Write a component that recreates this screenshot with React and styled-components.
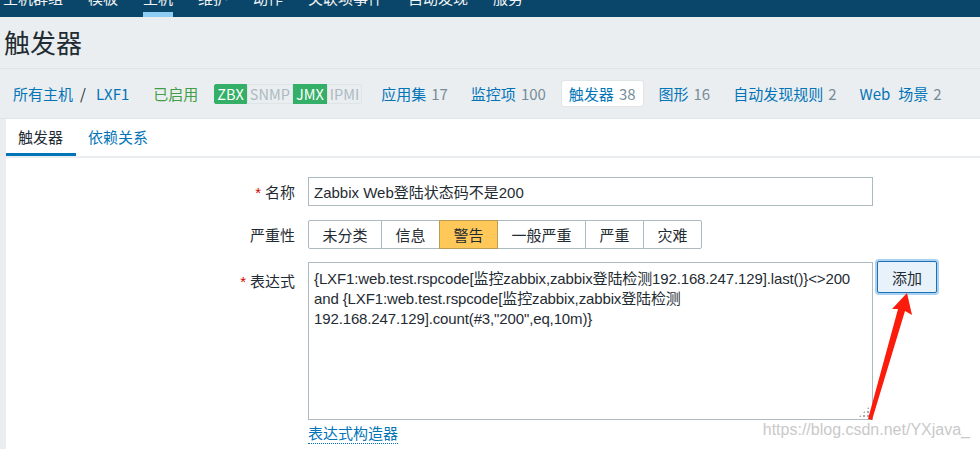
import React from "react";
import styled, { createGlobalStyle } from "styled-components";

const GlobalStyle = createGlobalStyle`
  html, body {
    margin: 0;
    padding: 0;
    background: #ebeef0;
    font-family: "Liberation Sans", "Noto Sans CJK SC", sans-serif;
    font-size: 15px;
    color: #1f2c33;
  }
  * { box-sizing: border-box; }
`;

const topMenu = ["主机群组", "模板", "主机", "维护", "动作", "关联项事件", "自动发现", "服务"];

const hostNav = [
  { label: "应用集", count: 17 },
  { label: "监控项", count: 100 },
  { label: "触发器", count: 38, active: true },
  { label: "图形", count: 16 },
  { label: "自动发现规则", count: 2 },
  { label: "场景", prefix: "Web", count: 2 },
];

const severities = ["未分类", "信息", "警告", "一般严重", "严重", "灾难"];

const expression =
  '{LXF1:web.test.rspcode[监控zabbix,zabbix登陆检测192.168.247.129].last()}<>200 and {LXF1:web.test.rspcode[监控zabbix,zabbix登陆检测192.168.247.129].count(#3,"200",eq,10m)}';

export default function App() {
  return (
    <Page>
      <GlobalStyle />
      <TopNav>
        <TopMenu>
          {topMenu.map((m) => (
            <TopItem key={m} $active={m === "主机"}>
              {m}
            </TopItem>
          ))}
        </TopMenu>
      </TopNav>

      <Header>
        <h1>触发器</h1>
      </Header>

      <HostBar>
        <Crumbs>
          <Link>所有主机</Link>
          <Sep>/</Sep>
          <Link>LXF1</Link>
        </Crumbs>
        <Status>已启用</Status>
        <Badges>
          <Badge $on>ZBX</Badge>
          <Badge>SNMP</Badge>
          <Badge $on>JMX</Badge>
          <Badge>IPMI</Badge>
        </Badges>
        {hostNav.map((n) => (
          <HostLink key={n.label} $active={n.active}>
            <Link>
              {n.prefix && <Prefix>{n.prefix}</Prefix>}
              {n.label}
            </Link>
            <Count>{n.count}</Count>
          </HostLink>
        ))}
      </HostBar>

      <Panel>
        <Tabs>
          <Tab $active>触发器</Tab>
          <Tab>依赖关系</Tab>
        </Tabs>

        <Form>
          <Row>
            <Label $required>名称</Label>
            <TextInput readOnly value="Zabbix Web登陆状态码不是200" />
          </Row>
          <Row>
            <Label>严重性</Label>
            <Segmented>
              {severities.map((s) => (
                <SevButton key={s} $selected={s === "警告"}>
                  {s}
                </SevButton>
              ))}
            </Segmented>
          </Row>
          <Row $top>
            <Label $required $top>表达式</Label>
            <Field>
              <ExprLine>
                <AreaWrap>
                  <ExprArea readOnly value={expression} />
                </AreaWrap>
                <AddButton>添加</AddButton>
              </ExprLine>
              <Builder>表达式构造器</Builder>
            </Field>
          </Row>
        </Form>
      </Panel>

      <Arrow viewBox="0 0 980 449">
        <polygon points="907,293 912,315 905,311 872,420 868,419 898,309 892,309" fill="#fb1c0c" />
      </Arrow>
      <Watermark>https://blog.csdn.net/YXjava_</Watermark>
    </Page>
  );
}

const Page = styled.div`
  position: relative;
  width: 980px;
  height: 449px;
  overflow: hidden;
`;

const TopNav = styled.nav`
  height: 17px;
  background: #0a466a;
  overflow: hidden;
`;

const TopMenu = styled.ul`
  display: flex;
  gap: 25px;
  margin: -10px 0 0;
  padding: 0 0 0 3px;
  list-style: none;
`;

const TopItem = styled.li`
  color: #f2f4f5;
  font-size: 15px;
  line-height: 18px;
  height: 27px;
  border-bottom: 5px solid ${(p) => (p.$active ? "#8fcdf5" : "transparent")};
`;

const Header = styled.header`
  height: 52px;
  display: flex;
  align-items: center;
  padding: 2px 4px 0;
  border-bottom: 1px solid #dfe4e7;

  h1 {
    margin: 0;
    font-size: 26px;
    font-weight: normal;
    color: #1f2c33;
    line-height: 30px;
  }
`;

const HostBar = styled.div`
  height: 50px;
  display: flex;
  align-items: center;
  gap: 9px;
  padding: 0 6px;
  border-bottom: 1px solid #dfe4e7;
  font-family: "Noto Sans CJK SC", sans-serif;
  line-height: 20px;
`;

const Link = styled.span`
  color: #0275b8;
`;

const Prefix = styled.span`
  margin-right: 8px;
`;

const Crumbs = styled.div`
  display: flex;
  align-items: center;
  padding: 0 7px;
`;

const Sep = styled.span`
  color: #1f2c33;
  margin: 0 10px 0 7px;
`;

const Status = styled.span`
  color: #429e47;
  padding: 0 7px;
  margin-left: 1px;
`;

const Badges = styled.div`
  display: flex;
  margin-right: 3px;
`;

const Badge = styled.span`
  height: 20px;
  line-height: 18px;
  font-size: 14.5px;
  padding: 0 2px;
  border: 1px solid ${(p) => (p.$on ? "#34af67" : "#dfe4e7")};
  background: ${(p) => (p.$on ? "#34af67" : "#ebeef0")};
  color: ${(p) => (p.$on ? "#ffffff" : "#acbbc2")};
  &:first-child { border-radius: 2px 0 0 2px; }
  &:last-child { border-radius: 0 2px 2px 0; }
`;

const HostLink = styled.span`
  display: flex;
  align-items: center;
  gap: 5px;
  height: 25px;
  padding: 0 7px;
  border-radius: 2px;
  background: ${(p) => (p.$active ? "#ffffff" : "transparent")};
  box-shadow: ${(p) => (p.$active ? "0 0 0 1px #e0e5e8" : "none")};
`;

const Count = styled.span`
  color: #768d99;
`;

const Panel = styled.main`
  margin-left: 6px;
  background: #ffffff;
  height: 340px;
`;

const Tabs = styled.div`
  display: flex;
  height: 39px;
  border-bottom: 2px solid #ebeef0;
`;

const Tab = styled.div`
  padding: 1px 13px 0 12px;
  display: flex;
  align-items: center;
  height: 37px;
  color: ${(p) => (p.$active ? "#1f2c33" : "#0275b8")};
  border-bottom: 3px solid ${(p) => (p.$active ? "#0275b8" : "transparent")};
`;

const Form = styled.div`
  display: flex;
  flex-direction: column;
  gap: 14px;
  padding-top: 19px;
`;

const Row = styled.div`
  display: flex;
  align-items: ${(p) => (p.$top ? "flex-start" : "center")};
  gap: 13px;
`;

const Label = styled.label`
  width: 289px;
  flex: none;
  text-align: right;
  color: #1f2c33;
  padding-top: ${(p) => (p.$top ? "7px" : "0")};

  &::before {
    content: ${(p) => (p.$required ? '"*"' : "none")};
    color: #d40000;
    margin-right: 4px;
  }
`;

const TextInput = styled.input`
  width: 565px;
  height: 29px;
  border: 1px solid #acbbc2;
  padding: 0 5px;
  font: inherit;
  font-size: 15px;
  color: #1f2c33;
  outline: none;
`;

const Segmented = styled.div`
  display: flex;
`;

const SevButton = styled.button`
  height: 29px;
  padding: 0 13.5px;
  font: inherit;
  font-size: 15px;
  color: #1f2c33;
  background: ${(p) => (p.$selected ? "#ffc859" : "#ffffff")};
  border: 1px solid ${(p) => (p.$selected ? "#b89b54" : "#acbbc2")};
  margin-left: -1px;
  position: relative;
  z-index: ${(p) => (p.$selected ? 1 : 0)};

  &:first-child {
    margin-left: 0;
    border-radius: 2px 0 0 2px;
  }
  &:last-child { border-radius: 0 2px 2px 0; }
`;

const Field = styled.div`
  display: flex;
  flex-direction: column;
  align-items: flex-start;
`;

const ExprLine = styled.div`
  display: flex;
  align-items: flex-start;
  gap: 4px;
  margin-top: -1px;
`;

const AreaWrap = styled.div`
  position: relative;
  width: 565px;
  height: 158px;

  &::after {
    content: "";
    position: absolute;
    right: 3px;
    bottom: 2px;
    width: 12px;
    height: 12px;
    background: radial-gradient(circle, #aaaaaa 1.1px, transparent 1.4px) 0 0 / 4px 4px;
    clip-path: polygon(100% 0, 100% 100%, 0 100%);
  }
`;

const ExprArea = styled.textarea`
  width: 100%;
  height: 100%;
  resize: none;
  border: 1px solid #acbbc2;
  padding: 6px 5px;
  font: inherit;
  font-size: 15px;
  letter-spacing: -0.13px;
  line-height: 20px;
  color: #1f2c33;
  outline: none;
  overflow: hidden;
`;

const AddButton = styled.button`
  width: 60px;
  height: 32px;
  margin-top: -1px;
  font: inherit;
  font-size: 15px;
  color: #1f2c33;
  background: #e8f2fb;
  border: 1px solid #1f6fb4;
  border-radius: 2px;
  box-shadow: 0 0 0 2px #a9d2f2;
`;

const Builder = styled.span`
  margin-top: 5px;
  color: #0275b8;
  border-bottom: 1px dotted #0275b8;
  line-height: 18px;
`;

const Arrow = styled.svg`
  position: absolute;
  left: 0;
  top: 0;
  width: 980px;
  height: 449px;
  pointer-events: none;
`;

const Watermark = styled.span`
  position: absolute;
  right: 10px;
  top: 421px;
  font-size: 16px;
  color: #c9c9c9;
  text-shadow: 0 0 1px #fff;
  pointer-events: none;
`;
